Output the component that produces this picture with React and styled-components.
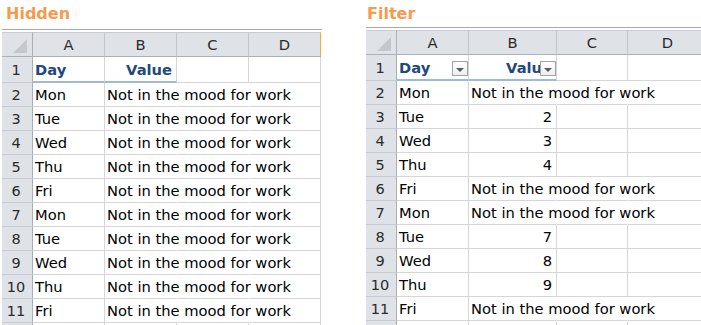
import React from "react";
import styled, { createGlobalStyle, css } from "styled-components";

const Global = createGlobalStyle`
  html, body { margin: 0; padding: 0; background: #fff; overflow: hidden; }
  body { font-family: "DejaVu Sans", Verdana, sans-serif; }
`;

const Page = styled.div`
  display: flex;
  align-items: flex-start;
  gap: 44px;
  padding-left: 2px;
  width: 701px;
  height: 325px;
  overflow: hidden;
`;

const Panel = styled.section`
  display: flex;
  flex-direction: column;
  width: ${(p) => p.$width}px;
  flex: none;
  overflow: hidden;
`;

const Title = styled.h2`
  margin: 0;
  box-sizing: border-box;
  height: ${(p) => p.$height}px;
  padding: 3px 0 0 ${(p) => p.$indent}px;
  font: bold 16px/22px "DejaVu Sans", Verdana, sans-serif;
  color: #f79a4e;
`;

const Sheet = styled.div`
  border-top: 1px solid #a9a9a9;
  padding-top: 2px;
`;

const Row = styled.div`
  display: grid;
  grid-template-columns: ${(p) => p.$cols};
  height: ${(p) => p.$h}px;
`;

const cellBase = css`
  box-sizing: border-box;
  position: relative;
  display: flex;
  align-items: center;
  white-space: nowrap;
  overflow: visible;
  font-size: 14.7px;
`;

const ColHead = styled.div`
  ${cellBase};
  justify-content: center;
  background: #dfe3e8;
  border-top: 1px solid #c9cdd2;
  border-right: 1px solid ${(p) => (p.$edge ? "#f2ab3c" : "#c2c6cc")};
  border-bottom: 1px solid #a9b0b8;
  color: #2a2a2a;
  font-size: 14.7px;
`;

const Corner = styled(ColHead)`
  border-right-color: #a9b0b8;
  &::after {
    content: "";
    position: absolute;
    right: 5px;
    bottom: 3px;
    width: 0;
    height: 0;
    border-left: 14px solid transparent;
    border-bottom: 14px solid #c4c8cd;
  }
`;

const RowHead = styled.div`
  ${cellBase};
  justify-content: center;
  padding-right: 2px;
  background: #dfe3e8;
  border-right: 1px solid #a9b0b8;
  border-bottom: 1px solid #c8ccd2;
  color: #2a2a2a;
  font-size: 14.5px;
`;

const Cell = styled.div`
  ${cellBase};
  justify-content: ${(p) => (p.$right ? "flex-end" : "flex-start")};
  padding: ${(p) => (p.$right ? "0 4px 0 0" : "0 0 0 2px")};
  border-right: 1px solid ${(p) => (p.$noRight ? "transparent" : "#d6d6d6")};
  border-bottom: ${(p) => (p.$band ? "2px solid #9fb9dc" : "1px solid #d6d6d6")};
  color: ${(p) => (p.$bold ? "#1f497d" : "#000")};
  font-weight: ${(p) => (p.$bold ? "bold" : "normal")};
  z-index: ${(p) => (p.$span ? 1 : 0)};
`;

const Text = styled.span`
  position: relative;
  z-index: 1;
`;

const FilterButton = styled.span`
  position: absolute;
  right: 0;
  top: 6px;
  width: 16px;
  height: 15px;
  box-sizing: border-box;
  border: 1px solid #a3a3a3;
  background: linear-gradient(#ffffff, #eceef0);
  z-index: 2;
  display: flex;
  align-items: center;
  justify-content: center;
  &::after {
    content: "";
    width: 0;
    height: 0;
    margin-top: 2px;
    border-left: 4px solid transparent;
    border-right: 4px solid transparent;
    border-top: 4px solid #5a5a5a;
  }
`;

const TEXT = "Not in the mood for work";

const hiddenRows = ["Mon", "Tue", "Wed", "Thu", "Fri", "Mon", "Tue", "Wed", "Thu", "Fri"].map(
  (d) => ({ day: d, value: TEXT })
);

const filterRows = [
  { day: "Mon", value: TEXT },
  { day: "Tue", value: 2 },
  { day: "Wed", value: 3 },
  { day: "Thu", value: 4 },
  { day: "Fri", value: TEXT },
  { day: "Mon", value: TEXT },
  { day: "Tue", value: 7 },
  { day: "Wed", value: 8 },
  { day: "Thu", value: 9 },
  { day: "Fri", value: TEXT },
];

function SpreadSheet({ cols, rows, filter, edge }) {
  return (
    <Sheet>
      <Row $cols={cols} $h={25}>
        <Corner />
        <ColHead>A</ColHead>
        <ColHead>B</ColHead>
        <ColHead>C</ColHead>
        <ColHead $edge={edge}>D</ColHead>
      </Row>
      <Row $cols={cols} $h={26}>
        <RowHead>1</RowHead>
        <Cell $bold $band>
          <Text>Day</Text>
          {filter && <FilterButton />}
        </Cell>
        <Cell $bold $band $right>
          <Text>Value</Text>
          {filter && <FilterButton />}
        </Cell>
        <Cell />
        <Cell />
      </Row>
      {rows.map((r, i) => {
        const isText = typeof r.value === "string";
        return (
          <Row key={i} $cols={cols} $h={24}>
            <RowHead>{i + 2}</RowHead>
            <Cell>{r.day}</Cell>
            {isText ? (
              <>
                <Cell $noRight $span>{r.value}</Cell>
                <Cell $noRight />
                <Cell />
              </>
            ) : (
              <>
                <Cell $right>{r.value}</Cell>
                <Cell />
                <Cell />
              </>
            )}
          </Row>
        );
      })}
      <Row $cols={cols} $h={24}>
        <RowHead />
        <Cell />
        <Cell />
        <Cell />
        <Cell />
      </Row>
    </Sheet>
  );
}

export default function App() {
  return (
    <>
      <Global />
      <Page>
        <Panel $width={320}>
          <Title $height={29} $indent={4}>Hidden</Title>
          <SpreadSheet cols="31px 72px 72px 72px 72px" rows={hiddenRows} edge />
        </Panel>
        <Panel $width={335}>
          <Title $height={27} $indent={1}>Filter</Title>
          <SpreadSheet cols="31px 72px 88px 71px 80px" rows={filterRows} filter />
        </Panel>
      </Page>
    </>
  );
}
